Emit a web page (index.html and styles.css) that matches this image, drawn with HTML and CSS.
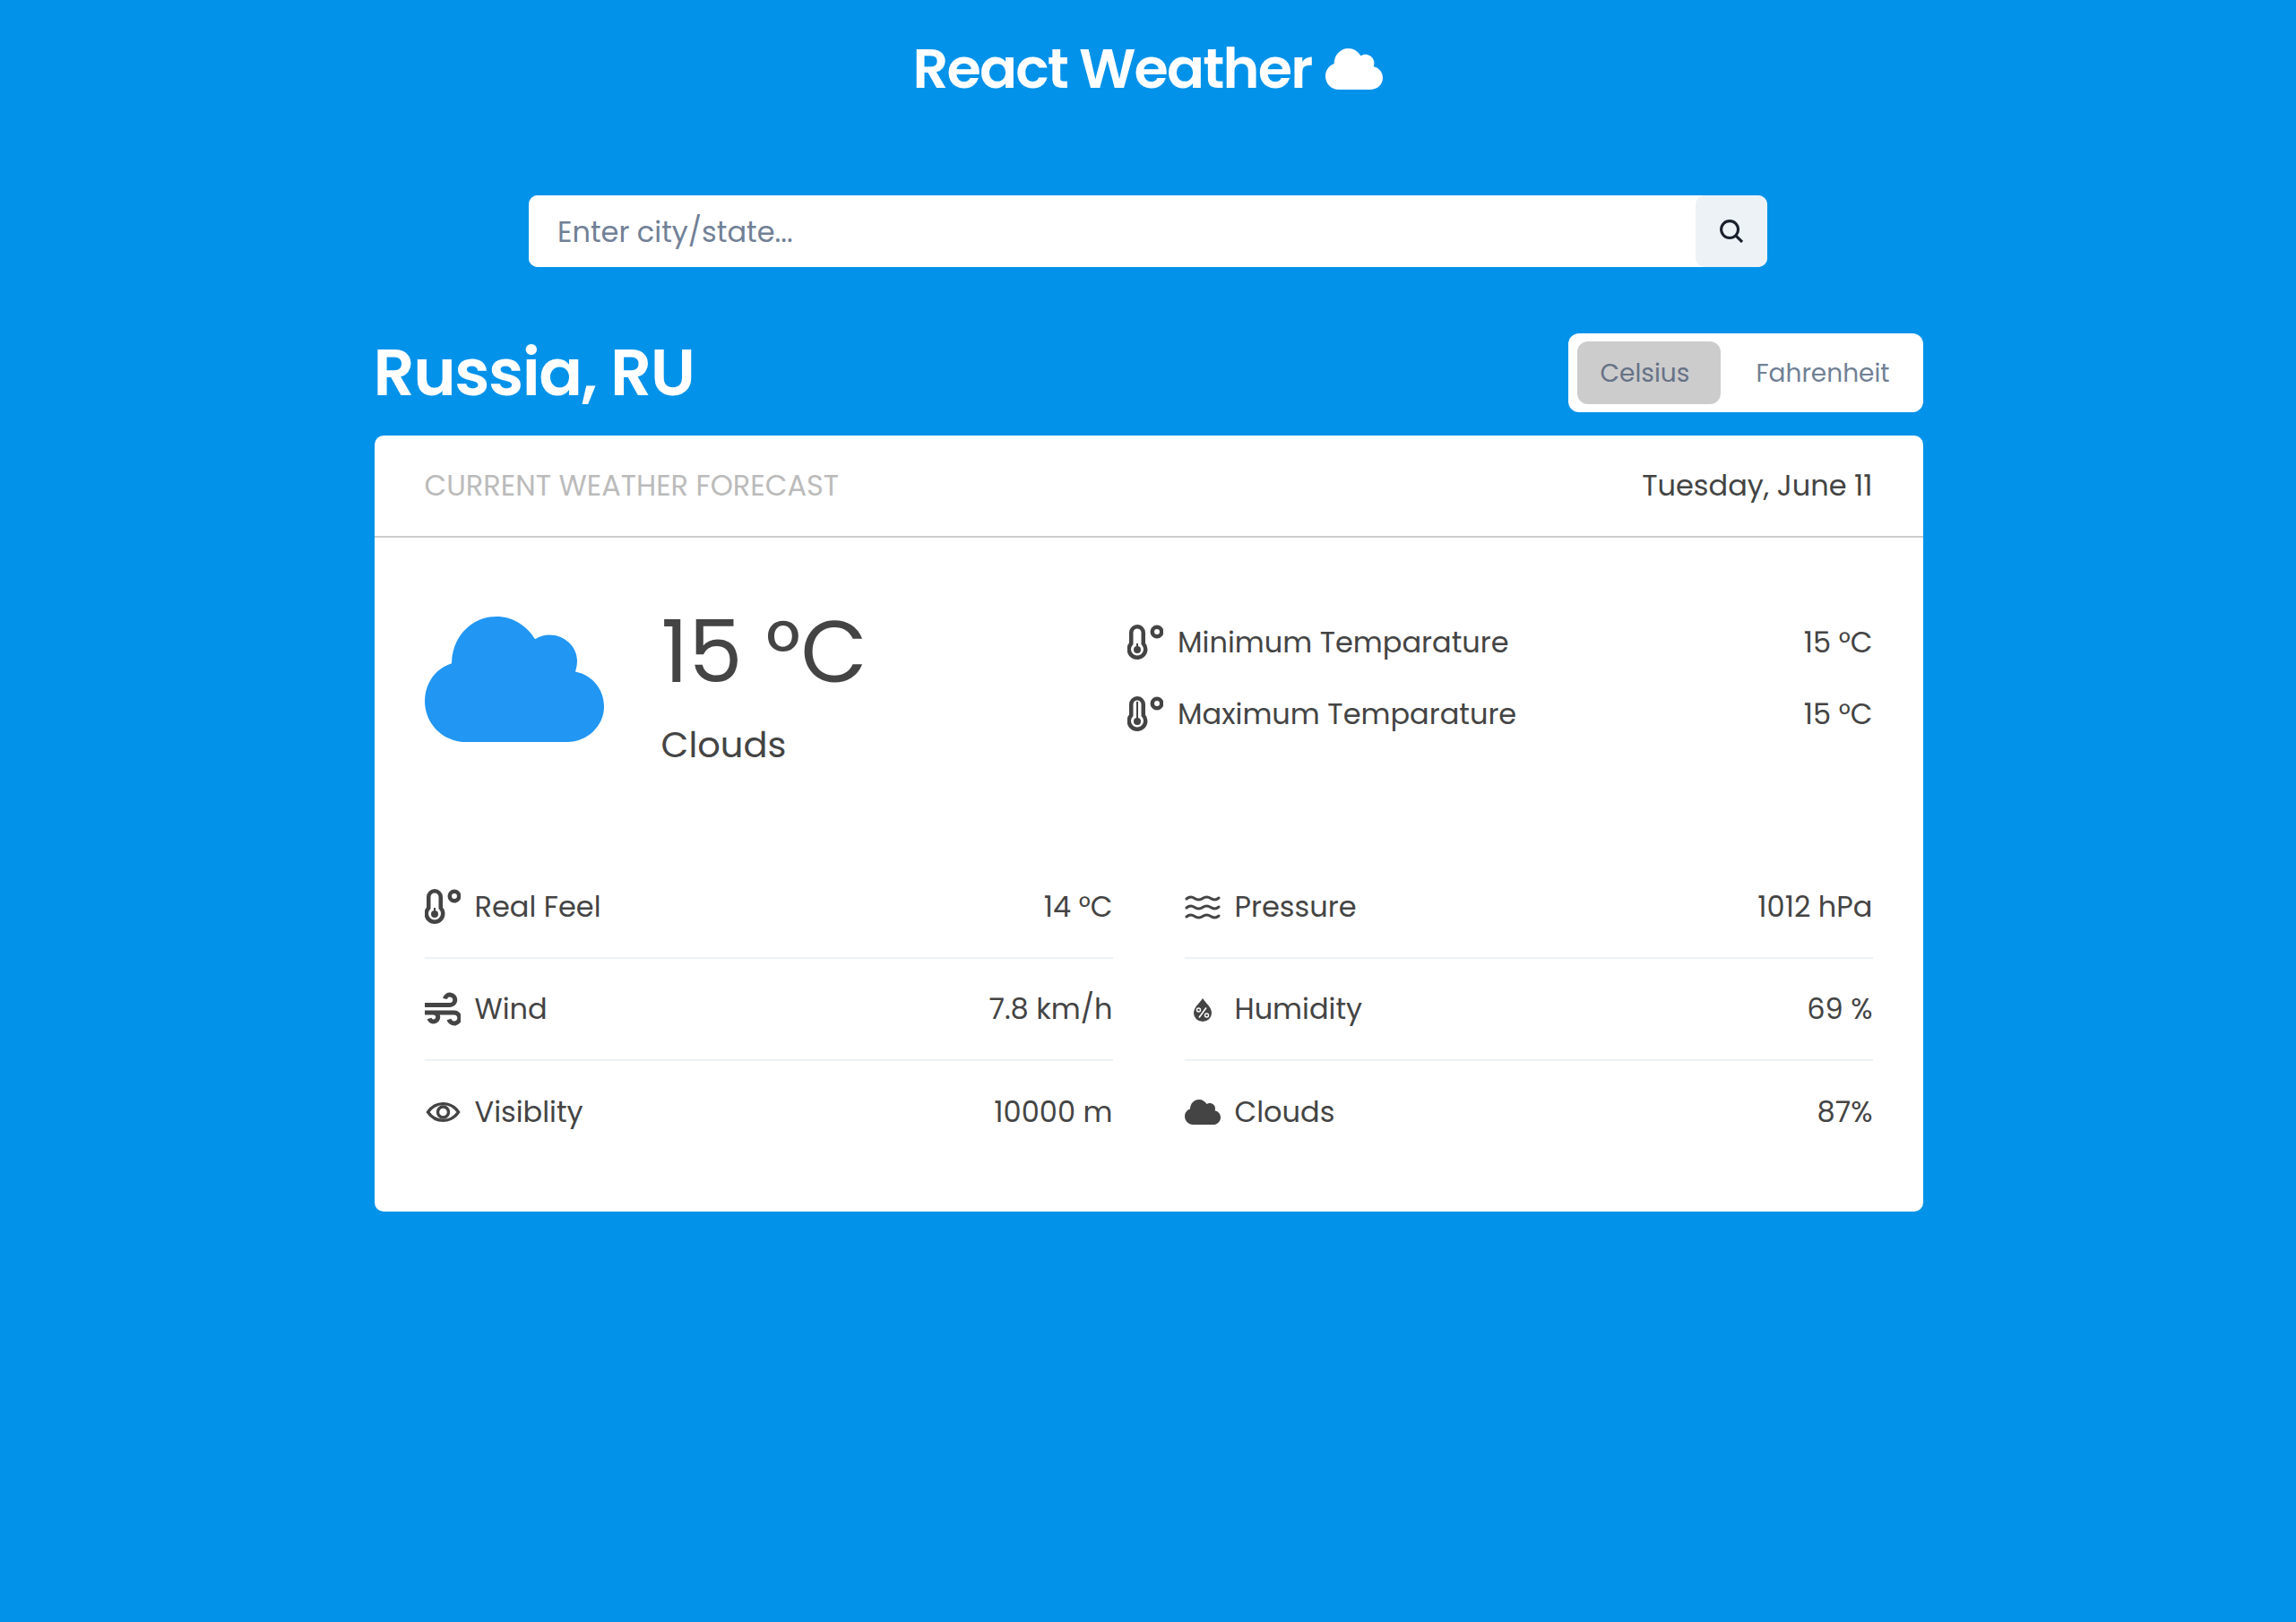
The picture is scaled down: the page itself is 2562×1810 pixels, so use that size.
FILE: index.html
```html
<!DOCTYPE html>
<html>
  <head>
    <meta charset="UTF-8">
    <title>React Weather</title>
    <link rel="stylesheet" href="styles.css">
  </head>
  <body>
    <svg class="defs" width="0" height="0">
      <symbol id="cloud" viewBox="0 0 200 150" preserveAspectRatio="none">
        <path d="M46 150C20 150 0 128 0 101 0 80 12 62 30 56 30 25 52 0 80 0 98 0 114 11 123 27 128 24 133 22 139 22 156 22 170 36 170 53 170 58 169 62 168 66 187 70 200 87 200 108 200 131 181 150 159 150Z"/>
      </symbol>
      <symbol id="thermo-low" viewBox="0 0 40 40">
        <path fill="none" stroke="#444" stroke-width="4.500" d="M4.250 21.200V9a6.750 6.750 0 0 1 13.500 0v12.200a9.250 9.250 0 1 1-13.500 0Z"/>
        <path stroke="#444" stroke-width="2" d="M11 21v8"/>
        <circle fill="#444" cx="11" cy="28" r="4"/>
        <circle fill="none" stroke="#444" stroke-width="4.500" cx="33" cy="8" r="5.250"/>
      </symbol>
      <symbol id="thermo-high" viewBox="0 0 40 40">
        <path fill="none" stroke="#444" stroke-width="4.500" d="M4.250 21.200V9a6.750 6.750 0 0 1 13.500 0v12.200a9.250 9.250 0 1 1-13.500 0Z"/>
        <path stroke="#444" stroke-width="2" d="M11 6v22"/>
        <circle fill="#444" cx="11" cy="28" r="4"/>
        <circle fill="none" stroke="#444" stroke-width="4.500" cx="33" cy="8" r="5.250"/>
      </symbol>
    </svg>
    <h1 class="brand">React Weather
      <svg class="brand-icon"><use href="#cloud"/></svg>
    </h1>
    <div class="search">
      <input class="search-input" type="text" placeholder="Enter city/state...">
      <button class="search-btn">
        <svg viewBox="0 0 27 27" width="26" height="26" fill="none" stroke="#1a202c" stroke-width="3.200"><circle cx="11.500" cy="11.500" r="9.800"/><path d="M18.500 18.500l7.500 7.500"/></svg>
      </button>
    </div>
    <main class="content">
      <div class="title-row">
        <h2 class="city">Russia, RU</h2>
        <div class="units">
          <span class="unit unit-active">Celsius</span>
          <span class="unit">Fahrenheit</span>
        </div>
      </div>
      <section class="card">
        <header class="card-head">
          <span class="card-label">CURRENT WEATHER FORECAST</span>
          <span class="card-date">Tuesday, June 11</span>
        </header>
        <div class="card-body">
          <div class="summary">
            <svg class="big-cloud"><use href="#cloud"/></svg>
            <div class="now">
              <div class="now-temp">15 °C</div>
              <div class="now-desc">Clouds</div>
            </div>
            <div class="minmax">
              <div class="stat stat-plain">
                <svg class="ico" viewBox="0 0 40 40"><use href="#thermo-low"/></svg>
                <span class="stat-name">Minimum Temparature</span>
                <span class="stat-val">15 °C</span>
              </div>
              <div class="stat stat-plain">
                <svg class="ico" viewBox="0 0 40 40"><use href="#thermo-high"/></svg>
                <span class="stat-name">Maximum Temparature</span>
                <span class="stat-val">15 °C</span>
              </div>
            </div>
          </div>
          <div class="details">
            <div class="stat">
              <svg class="ico" viewBox="0 0 40 40"><use href="#thermo-low"/></svg>
              <span class="stat-name">Real Feel</span>
              <span class="stat-val">14 °C</span>
            </div>
            <div class="stat">
              <svg class="ico" viewBox="0 0 40 40"><path fill="none" stroke="#444" stroke-width="3" stroke-linecap="round" d="M2 11c3-2.500 6-2.500 9-.5s6 2 9 0 6-2 9 0 6 2 9-.5M2 21c3-2.500 6-2.500 9-.5s6 2 9 0 6-2 9 0 6 2 9-.5M2 31c3-2.500 6-2.500 9-.5s6 2 9 0 6-2 9 0 6 2 9-.5"/></svg>
              <span class="stat-name">Pressure</span>
              <span class="stat-val">1012 hPa</span>
            </div>
            <div class="stat">
              <svg class="ico" viewBox="0 0 40 40"><path fill="none" stroke="#444" stroke-width="5" d="M0 15.500H28a5.700 5.700 0 1 0-5.500-7M0 24H33a6 6 0 1 1-6 7.500M10 24a5 5 0 1 1-5 6.500"/></svg>
              <span class="stat-name">Wind</span>
              <span class="stat-val">7.8 km/h</span>
            </div>
            <div class="stat">
              <svg class="ico" viewBox="0 0 40 40"><path fill="#444" d="M20 8C24 14 30 18 30 24.500A10 9.500 0 0 1 10 24.500C10 18 16 14 20 8Z"/><path stroke="#fff" stroke-width="1.600" d="M16 29.500l8-11"/><circle fill="none" stroke="#fff" stroke-width="1.400" cx="15.500" cy="21" r="2"/><circle fill="none" stroke="#fff" stroke-width="1.400" cx="24.500" cy="27" r="2"/></svg>
              <span class="stat-name">Humidity</span>
              <span class="stat-val">69 %</span>
            </div>
            <div class="stat">
              <svg class="ico" viewBox="0 0 40 40"><path fill="none" stroke="#444" stroke-width="3.400" d="M3.500 20C12 7.500 29 7.500 37.500 20 29 32.500 12 32.500 3.500 20Z"/><circle fill="none" stroke="#444" stroke-width="3.400" cx="20.500" cy="20" r="6"/></svg>
              <span class="stat-name">Visiblity</span>
              <span class="stat-val">10000 m</span>
            </div>
            <div class="stat">
              <svg class="ico ico-cloud"><use href="#cloud" fill="#444"/></svg>
              <span class="stat-name">Clouds</span>
              <span class="stat-val">87%</span>
            </div>
          </div>
        </div>
      </section>
    </main>
  </body>
</html>
```

FILE: styles.css
```css
* {
  box-sizing: border-box;
}

body {
  margin: 0;
  min-height: 1810px;
  background-color: #0292ea;
  font-family: Poppins, "Open Sans", "Noto Sans", sans-serif;
  color: #444;
}

.defs {
  position: absolute;
}

/* Header */
.brand {
  display: flex;
  justify-content: center;
  align-items: center;
  gap: 16px;
  margin: 0;
  padding-top: 36px;
  height: 118px;
  font-size: 62px;
  line-height: 82px;
  font-weight: 600;
  letter-spacing: -1.800px;
  color: #fff;
}

.brand-icon {
  width: 64px;
  height: 46px;
  fill: #fff;
}

/* Search */
.search {
  display: flex;
  width: 1382px;
  height: 80px;
  margin: 100px auto 0;
  background-color: #fff;
  border-radius: 10px;
  overflow: hidden;
}

.search-input {
  flex: 1;
  border: none;
  outline: none;
  padding: 2px 32px 0;
  font-family: inherit;
  font-size: 32px;
  color: #444;
}

.search-input::placeholder {
  color: #718096;
}

.search-btn {
  width: 80px;
  border: none;
  border-radius: 10px;
  background-color: #edf2f7;
  display: flex;
  align-items: center;
  justify-content: center;
}

/* Title row */
.content {
  width: 1728px;
  margin-left: 417.500px;
}

.title-row {
  display: flex;
  justify-content: space-between;
  align-items: center;
  margin-top: 74px;
  height: 88px;
}

.city {
  margin: 0 0 0 -1px;
  font-size: 72px;
  font-weight: 600;
  letter-spacing: -1.500px;
  color: #fff;
}

.units {
  display: flex;
  align-items: center;
  height: 88px;
  padding: 8px 0 8px 10px;
  background-color: #fff;
  border-radius: 12px;
  font-size: 28px;
  color: #718096;
}

.unit {
  display: flex;
  align-items: center;
  height: 70px;
  padding: 2px 37px 0 39px;
  border-radius: 12px;
}

.unit-active {
  width: 160px;
  padding: 2px 0 0 25px;
  background-color: #ccc;
  color: #667287;
}

/* Card */
.card {
  margin-top: 26px;
  background-color: #fff;
  border-radius: 10px;
}

.card-head {
  display: flex;
  justify-content: space-between;
  align-items: center;
  height: 114px;
  padding: 0 56px;
  border-bottom: 2px solid #ccc;
  font-size: 32px;
}

.card-label {
  color: #bbb;
}

.card-body {
  padding: 56px 56px 54px;
}

.summary {
  display: flex;
  align-items: flex-start;
  height: 300px;
}

.big-cloud {
  width: 200px;
  height: 140px;
  margin-top: 32px;
  fill: #2196f3;
}

.now {
  width: 520.500px;
  margin-left: 64px;
}

.now-temp {
  font-size: 96px;
  line-height: 110px;
  margin-top: 17px;
}

.now-desc {
  font-size: 40px;
  line-height: 60px;
  margin-top: 18px;
}

.minmax {
  flex: 1;
  margin-top: 21px;
}

/* Detail rows */
.details {
  display: grid;
  grid-template-columns: 1fr 1fr;
  column-gap: 80px;
}

.stat {
  display: flex;
  align-items: center;
  height: 114px;
  font-size: 32px;
  border-bottom: 2px solid #edf2f7;
}

.stat-plain {
  height: 80px;
  border-bottom: none;
}

.details .stat:nth-last-child(-n+2) {
  border-bottom: none;
}

.ico {
  width: 40px;
  height: 40px;
  margin-right: 16px;
}

.ico-cloud {
  height: 28px;
}

.stat-name {
  flex: 1;
}
```
